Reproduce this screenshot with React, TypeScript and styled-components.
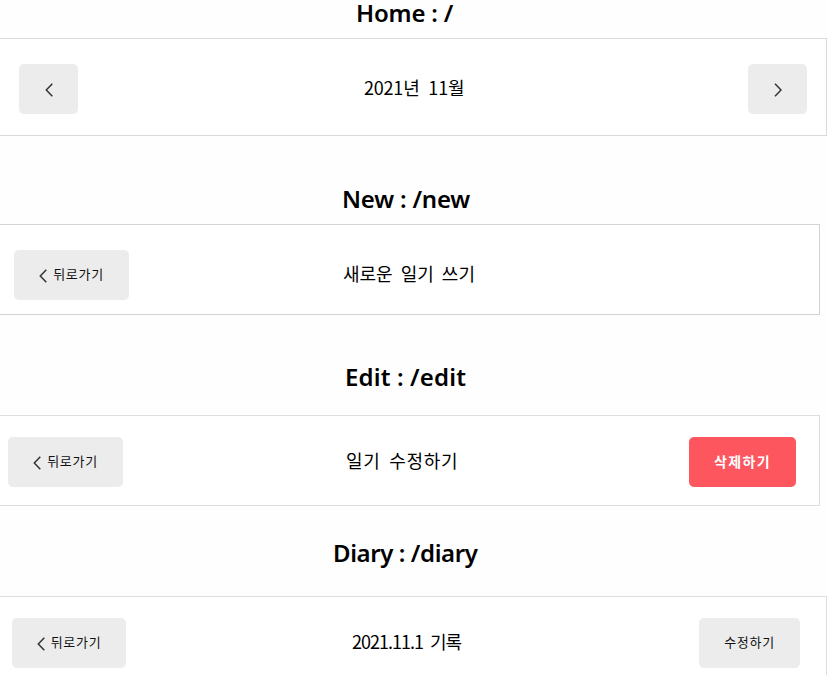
import React from "react";
import styled, { createGlobalStyle } from "styled-components";

const GlobalStyle = createGlobalStyle`
  * { box-sizing: border-box; }
  body { margin: 0; background: #fefefe; overflow: hidden; }
`;

const Page = styled.main`
  width: 827px;
  height: 675px;
  overflow: hidden;
  display: flex;
  flex-direction: column;
  color: #000;
`;

const Heading = styled.h2<{ $height: number; $top: number; $left: number; $spacing: number; $line?: number }>`
  margin: 0;
  flex: none;
  height: ${(p) => p.$height}px;
  padding: ${(p) => p.$top}px 0 0 ${(p) => p.$left}px;
  font: 600 24px/${(p) => p.$line ?? 32}px "Noto Sans", "Open Sans", sans-serif;
  letter-spacing: ${(p) => p.$spacing}px;
  white-space: pre;
`;

const HeaderBar = styled.header<{
  $width: number;
  $height: number;
  $padding: string;
  $line: string;
  $titleOffset: number;
}>`
  flex: none;
  width: ${(p) => p.$width}px;
  height: ${(p) => p.$height}px;
  padding: ${(p) => p.$padding};
  border: solid ${(p) => p.$line};
  border-width: 1px 1px 1px 0;
  display: grid;
  grid-template-columns: ${(p) => p.$titleOffset}px auto 1fr;
  align-items: start;
  background: #fff;
`;

const Title = styled.div<{ $spacing: number; $word: number }>`
  height: 50px;
  font: 400 18px/46px "Noto Sans CJK KR", sans-serif;
  letter-spacing: ${(p) => p.$spacing}px;
  word-spacing: ${(p) => p.$word}px;
  white-space: nowrap;
`;

const Button = styled.button<{ $width: number; $danger?: boolean; $end?: boolean }>`
  width: ${(p) => p.$width}px;
  height: 50px;
  padding: 0 0 3px;
  border: 0;
  border-radius: 5px;
  justify-self: ${(p) => (p.$end ? "end" : "start")};
  display: flex;
  align-items: center;
  justify-content: center;
  gap: 6px;
  background: ${(p) => (p.$danger ? "#fd565f" : "#ececec")};
  color: ${(p) => (p.$danger ? "#fff" : "#111")};
  font: ${(p) => (p.$danger ? "700 14px" : "400 13px")}/20px "Noto Sans CJK KR", sans-serif;
  letter-spacing: ${(p) => (p.$danger ? 1.4 : 0.7)}px;
  white-space: nowrap;
`;

const Arrow = styled.svg`
  width: 8px;
  height: 14px;
  flex: none;
  margin-top: 4px;
  fill: none;
  stroke: #333;
  stroke-width: 1.5;
`;

const Chevron = ({ next = false }: { next?: boolean }) => (
  <Arrow viewBox="0 0 8 14" aria-hidden="true">
    <path d={next ? "M1 0.7 L7 7 L1 13.3" : "M7.3 0.7 L1.3 7 L7.3 13.3"} />
  </Arrow>
);

const BackButton = ({ width }: { width: number }) => (
  <Button $width={width}>
    <Chevron />
    뒤로가기
  </Button>
);

export default function App() {
  return (
    <>
      <GlobalStyle />
      <Page>
        <Heading $height={38} $top={0} $left={356} $spacing={-0.2} $line={26}>Home : /</Heading>
        <HeaderBar $width={827} $height={98} $padding="25px 19px 0 19px" $line="#dadada" $titleOffset={345}>
          <Button $width={59} aria-label="이전 달"><Chevron /></Button>
          <Title $spacing={-0.2} $word={5}>2021년 11월</Title>
          <Button $width={59} $end aria-label="다음 달"><Chevron next /></Button>
        </HeaderBar>

        <Heading $height={88} $top={47} $left={342} $spacing={-0.2}>New : /new</Heading>
        <HeaderBar $width={820} $height={91} $padding="25px 19px 0 14px" $line="#d3d3d3" $titleOffset={329}>
          <BackButton width={115} />
          <Title $spacing={0} $word={4}>새로운 일기 쓰기</Title>
        </HeaderBar>

        <Heading $height={100} $top={46} $left={345} $spacing={0.15}>Edit : /edit</Heading>
        <HeaderBar $width={820} $height={91} $padding="21px 23px 0 8px" $line="#dedede" $titleOffset={338}>
          <BackButton width={115} />
          <Title $spacing={0.7} $word={4}>일기 수정하기</Title>
          <Button $width={107} $danger $end>삭제하기</Button>
        </HeaderBar>

        <Heading $height={90} $top={31} $left={333} $spacing={-0.4}>Diary : /diary</Heading>
        <HeaderBar $width={827} $height={98} $padding="21px 26px 0 12px" $line="#dedede" $titleOffset={340}>
          <BackButton width={114} />
          <Title $spacing={-1} $word={4}>2021.11.1 기록</Title>
          <Button $width={101} $end>수정하기</Button>
        </HeaderBar>
      </Page>
    </>
  );
}
